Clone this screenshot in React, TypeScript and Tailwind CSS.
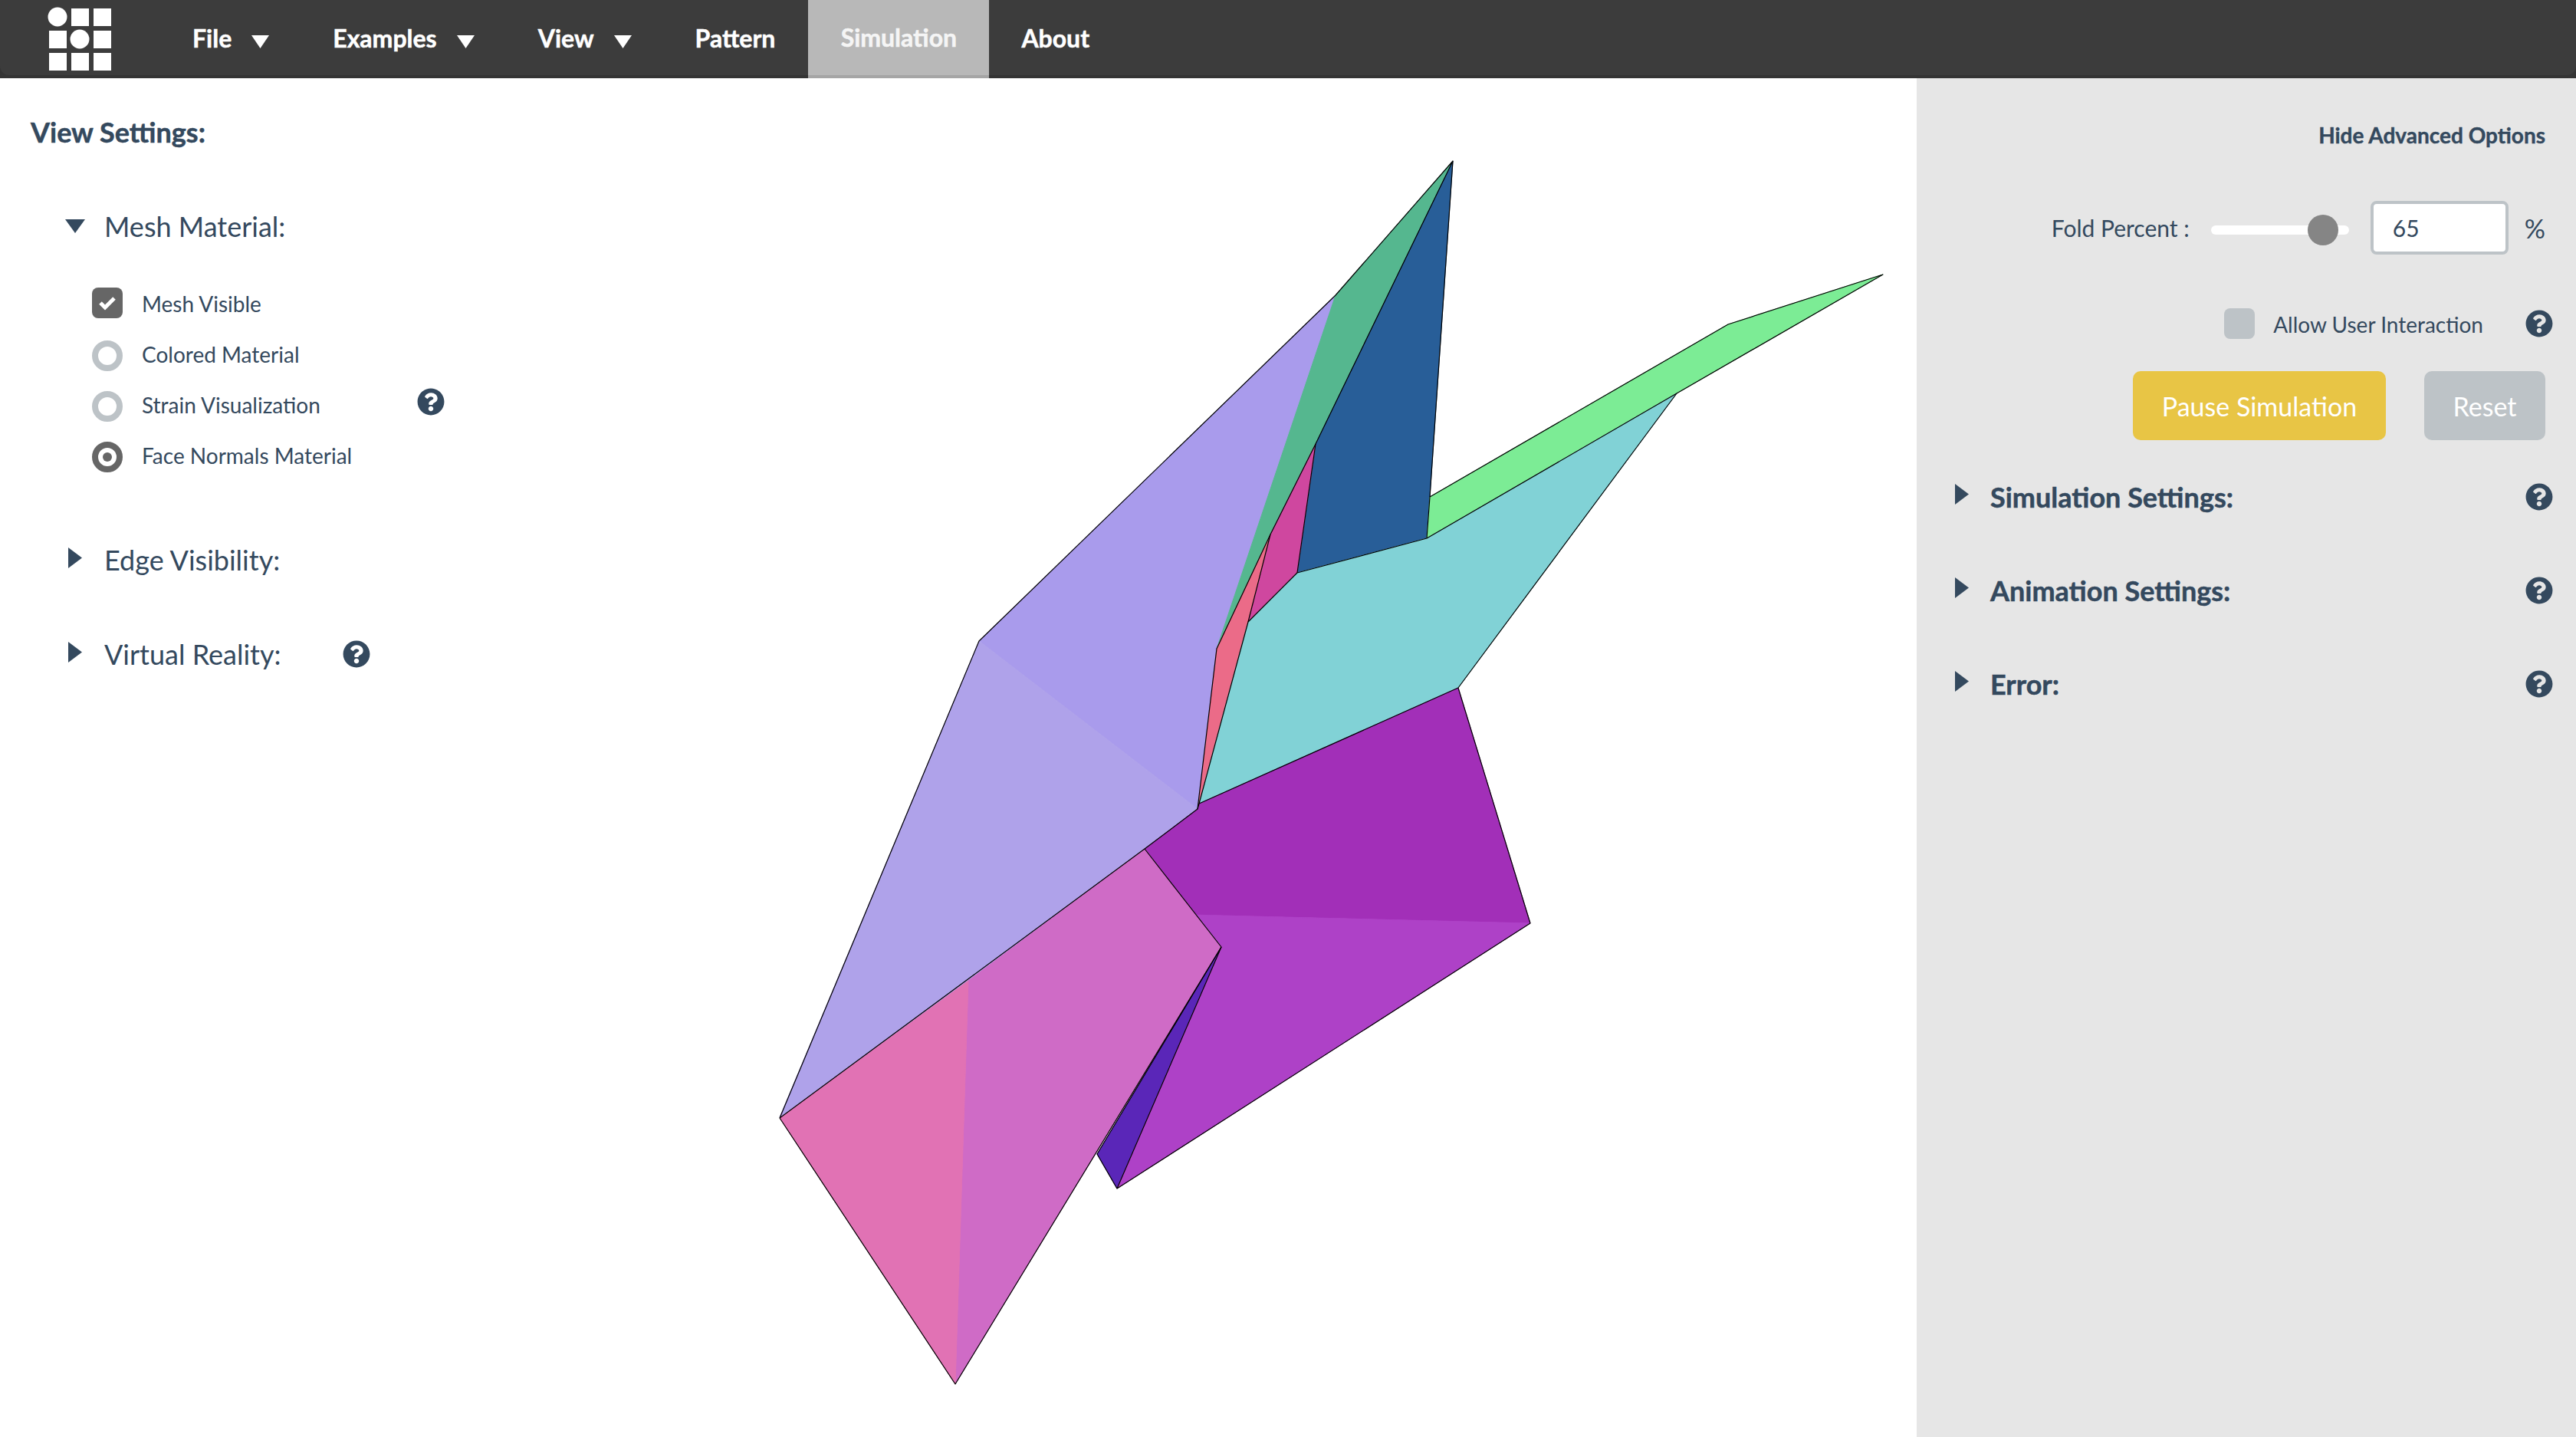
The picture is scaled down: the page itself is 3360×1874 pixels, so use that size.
import React from 'react';
import { FaQuestionCircle } from 'react-icons/fa';

const textColor = 'text-[#34495e]';

const Help = ({ className = '' }: { className?: string }) => (
  <FaQuestionCircle className={`h-9 w-9 shrink-0 text-[#34495e] ${className}`} />
);

const ArrowRight = ({ className = '' }: { className?: string }) => (
  <svg viewBox="0 0 18 27" className={`h-[27px] w-[18px] shrink-0 fill-[#34495e] ${className}`}>
    <path d="M0 0 L18 13.5 L0 27 Z" />
  </svg>
);

const ArrowDown = () => (
  <svg viewBox="0 0 26 18" className="h-[18px] w-[26px] shrink-0 fill-[#34495e]">
    <path d="M0 0 L26 0 L13 18 Z" />
  </svg>
);

const Caret = () => (
  <svg viewBox="0 0 23 17" className="mt-2 ml-[26px] h-[17px] w-[23px] fill-white">
    <path d="M0 0 L23 0 L11.5 17 Z" />
  </svg>
);

const Logo = () => (
  <svg viewBox="0 0 84 84" className="h-[84px] w-[84px]">
    <g fill="#ffffff">
      <circle cx="13" cy="13" r="12.5" />
      <rect x="31" y="2" width="23" height="23" />
      <rect x="60" y="2" width="23" height="23" />
      <rect x="2" y="31" width="23" height="23" />
      <circle cx="42" cy="42" r="12.5" />
      <rect x="60" y="31" width="23" height="23" />
      <rect x="2" y="60" width="23" height="23" />
      <rect x="31" y="60" width="23" height="23" />
      <rect x="60" y="60" width="23" height="23" />
    </g>
  </svg>
);

const CheckBox = ({ on, className = '' }: { on: boolean; className?: string }) => (
  <span className={`flex h-10 w-10 shrink-0 items-center justify-center rounded-lg ${on ? 'bg-[#666666]' : 'bg-[#bdc3c7]'} ${className}`}>
    {on && (
      <svg viewBox="0 0 24 20" className="h-5 w-6">
        <path d="M3 10 L9 16 L21 4" fill="none" stroke="#ffffff" strokeWidth="5" />
      </svg>
    )}
  </span>
);

const Radio = ({ on }: { on: boolean }) => (
  <span className={`mt-1 flex h-10 w-10 shrink-0 items-center justify-center rounded-full border-[8px] bg-white ${on ? 'border-[#666666]' : 'border-[#bdc3c7]'}`}>
    {on && <span className="h-3 w-3 rounded-full bg-[#666666]" />}
  </span>
);

const faces: { fill: string; points: string }[] = [
  { fill: '#a99bec', points: '1277,836 1742,385 1587,846 1562,1055' },
  { fill: '#afa2ea', points: '1277,836 1562,1055 1493,1107 1263,1279 1017,1457' },
  { fill: '#55b78f', points: '1742,385 1895,210 1716,579 1657,697 1587,846' },
  { fill: '#285e98', points: '1895,210 1865,648 1861,702 1692,747 1716,579' },
  { fill: '#cf479f', points: '1716,579 1692,747 1628,811 1657,697' },
  { fill: '#eb6b88', points: '1657,697 1628,811 1563,1052 1587,846' },
  { fill: '#7cec95', points: '1865,648 2254,423 2456,358 2187,513 1861,702' },
  { fill: '#81d2d6', points: '1692,747 1861,702 2187,513 1902,897 1564,1048 1628,811' },
  { fill: '#a22fb8', points: '1564,1048 1902,897 1996,1204 1555,1193 1493,1107 1562,1055' },
  { fill: '#5a26b8', points: '1593,1235 1457,1550 1431,1505' },
  { fill: '#ae41c7', points: '1555,1193 1996,1204 1457,1550 1593,1235' },
  { fill: '#cf6bc6', points: '1493,1107 1593,1235 1246,1805 1263,1279' },
  { fill: '#e172b4', points: '1263,1279 1246,1805 1017,1458' },
];

const edges = [
  '1017,1458 1277,836 1742,385 1895,210 1865,648 1861,702',
  '1017,1458 1493,1107 1562,1055 1587,846 1657,697 1716,579 1895,210',
  '1017,1458 1246,1805 1593,1235 1493,1107',
  '1593,1235 1457,1550 1996,1204 1902,897 2187,513',
  '1593,1235 1431,1505 1457,1550',
  '1562,1055 1564,1048 1902,897',
  '1564,1048 1628,811 1692,747 1861,702 2187,513 2456,358 2254,423 1865,648',
  '1628,811 1657,697',
  '1692,747 1716,579',
];

const Mesh = () => (
  <svg viewBox="640 102 1860 1772" className="h-full w-full">
    {faces.map((f, i) => (
      <polygon key={i} points={f.points} fill={f.fill} stroke={f.fill} strokeWidth="1" />
    ))}
    {edges.map((e, i) => (
      <polyline key={i} points={e} fill="none" stroke="#000000" strokeWidth="1.2" strokeLinejoin="round" />
    ))}
  </svg>
);

const NavItem = ({ label, caret, active, className = '' }: { label: string; caret?: boolean; active?: boolean; className?: string }) => (
  <div className={`flex h-full items-center text-[32px] font-bold [-webkit-text-stroke:0.5px] ${active ? 'border-b-4 border-[#a5a5a5] bg-[#b8b8b8]' : 'pb-[2px]'} ${className}`}>
    <span>{label}</span>
    {caret && <Caret />}
  </div>
);

const OptionRow = ({ children, help }: { children: React.ReactNode; help?: React.ReactNode }) => (
  <div className="flex h-[66px] items-center">
    {children}
    {help}
  </div>
);

const Section = ({ label, help }: { label: string; help?: boolean }) => (
  <div className="mb-[70px] flex h-[53px] items-center pl-[89px]">
    <ArrowRight className="-mt-1" />
    <span className="ml-[29px] text-[36px] leading-none">{label}</span>
    {help && <Help className="ml-[80px]" />}
  </div>
);

const RightSection = ({ label }: { label: string }) => (
  <div className="mb-[86px] flex h-9 items-center pr-[30px] pl-[50px]">
    <ArrowRight className="mb-2 h-[26px] w-[17px]" />
    <span className="ml-[28px] flex-1 text-[36px] leading-none font-bold [-webkit-text-stroke:0.5px]">{label}</span>
    <Help />
  </div>
);

export default function App() {
  return (
    <div className={`flex h-[1874px] w-[3360px] flex-col overflow-hidden bg-white font-['Lato',sans-serif] ${textColor}`}>
      <div className="h-[102px] shrink-0 bg-[#343434]">
        <nav className="flex h-full items-center rounded-b-xl bg-[#3c3c3c] text-white shadow-[inset_0_-4px_0_#343434]">
          <div className="mr-[105px] ml-[62px] flex h-full items-center">
            <Logo />
          </div>
          <NavItem label="File" caret className="pr-[83px]" />
          <NavItem label="Examples" caret className="pr-[83px]" />
          <NavItem label="View" caret className="pr-[83px]" />
          <NavItem label="Pattern" className="pr-[43px]" />
          <NavItem label="Simulation" active className="w-[236px] justify-center text-[#f5f5f5]" />
          <NavItem label="About" className="pl-[42px]" />
        </nav>
      </div>

      <div className="flex min-h-0 flex-1">
        <aside className="w-[640px] shrink-0 pt-[50px]">
          <h2 className="pl-10 text-[36px] leading-10 font-bold [-webkit-text-stroke:0.5px]">View Settings:</h2>
          <div className="mt-[83px] flex h-10 items-center pl-[85px]">
            <ArrowDown />
            <span className="ml-[25px] text-[36px] leading-none">Mesh Material:</span>
          </div>
          <div className="mt-12 pl-[120px] text-[28px]">
            <OptionRow><CheckBox on className="-mt-[3px]" /><span className="ml-[25px]">Mesh Visible</span></OptionRow>
            <OptionRow><Radio on={false} /><span className="ml-[25px]">Colored Material</span></OptionRow>
            <OptionRow help={<Help className="-mt-2 ml-[126px]" />}><Radio on={false} /><span className="ml-[25px]">Strain Visualization</span></OptionRow>
            <OptionRow><Radio on /><span className="ml-[25px]">Face Normals Material</span></OptionRow>
          </div>
          <div className="mt-[76px]">
            <Section label="Edge Visibility:" />
            <Section label="Virtual Reality:" help />
          </div>
        </aside>

        <main className="min-w-0 flex-1">
          <Mesh />
        </main>

        <aside className="w-[860px] shrink-0 bg-[#e6e6e6] pt-14">
          <div className="pr-10 text-right text-[28px] leading-9 font-bold [-webkit-text-stroke:0.4px]">Hide Advanced Options</div>
          <div className="mt-[68px] flex h-[70px] items-center justify-end pr-10 text-[30px]">
            <span>Fold Percent :</span>
            <div className="relative mt-[6px] ml-[28px] h-3 w-[180px] rounded-full bg-white">
              <span className="absolute top-[-14px] left-[126px] h-10 w-10 rounded-full bg-[#858585]" />
            </div>
            <div className="ml-[28px] flex h-[70px] w-[180px] items-center rounded-lg border-4 border-[#bdc3c7] bg-white pl-[25px]">65</div>
            <span className="ml-[21px] text-[34px]">%</span>
          </div>
          <div className="mt-[70px] flex h-10 items-center justify-end pr-[30px] text-[28px]">
            <CheckBox on={false} />
            <span className="mt-[2px] ml-[24px]">Allow User Interaction</span>
            <Help className="ml-[55px]" />
          </div>
          <div className="mt-[42px] flex justify-end gap-[50px] pr-10">
            <button className="h-[90px] w-[330px] rounded-[10px] bg-[#e8c545] text-[34px] text-white">Pause Simulation</button>
            <button className="h-[90px] w-[158px] rounded-[10px] bg-[#bdc3c7] text-[34px] text-white">Reset</button>
          </div>
          <div className="mt-14">
            <RightSection label="Simulation Settings:" />
            <RightSection label="Animation Settings:" />
            <RightSection label="Error:" />
          </div>
        </aside>
      </div>
    </div>
  );
}
